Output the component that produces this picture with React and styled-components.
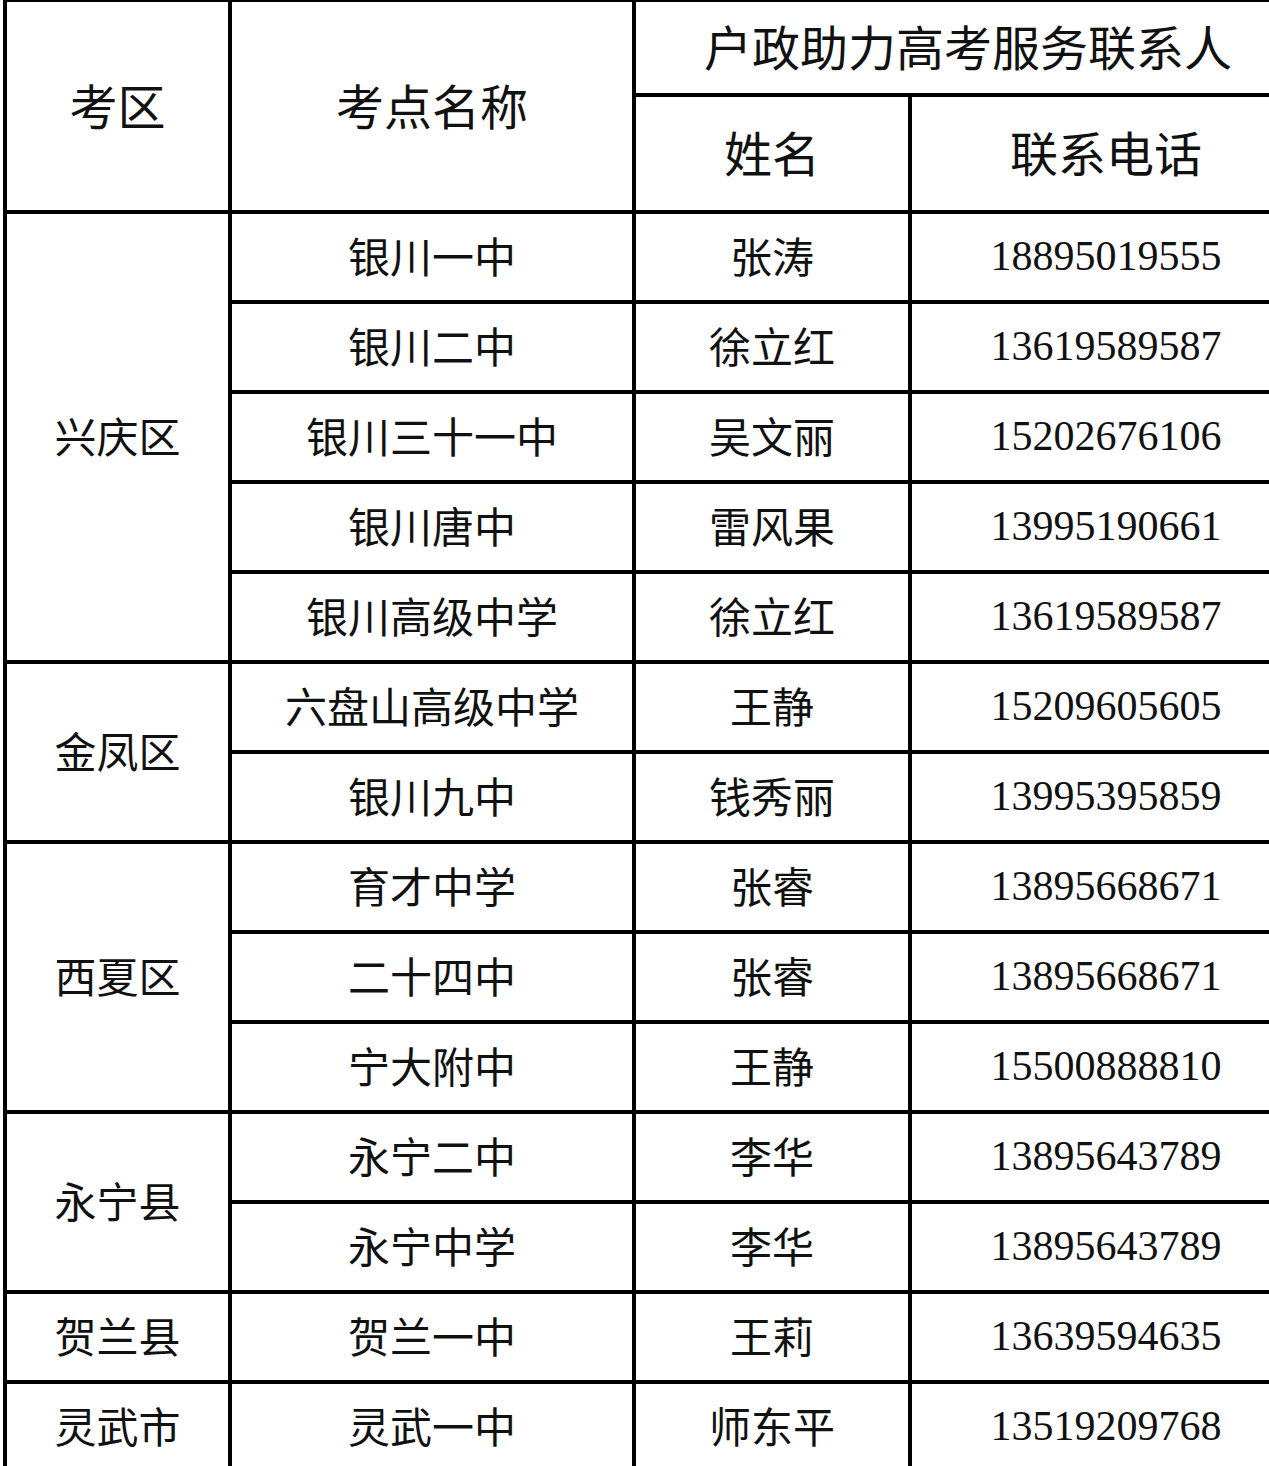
import styled, {createGlobalStyle} from 'styled-components';

const GlobalStyle = createGlobalStyle`
  html, body {
    margin: 0;
    padding: 0;
    background: #fff;
    overflow: hidden;
  }
`;

// 考区 -> 考点 list
const districts = [
  {
    name: '兴庆区',
    sites: [
      ['银川一中', '张涛', '18895019555'],
      ['银川二中', '徐立红', '13619589587'],
      ['银川三十一中', '吴文丽', '15202676106'],
      ['银川唐中', '雷风果', '13995190661'],
      ['银川高级中学', '徐立红', '13619589587'],
    ],
  },
  {
    name: '金凤区',
    sites: [
      ['六盘山高级中学', '王静', '15209605605'],
      ['银川九中', '钱秀丽', '13995395859'],
    ],
  },
  {
    name: '西夏区',
    sites: [
      ['育才中学', '张睿', '13895668671'],
      ['二十四中', '张睿', '13895668671'],
      ['宁大附中', '王静', '15500888810'],
    ],
  },
  {
    name: '永宁县',
    sites: [
      ['永宁二中', '李华', '13895643789'],
      ['永宁中学', '李华', '13895643789'],
    ],
  },
  {name: '贺兰县', sites: [['贺兰一中', '王莉', '13639594635']]},
  {name: '灵武市', sites: [['灵武一中', '师东平', '13519209768']]},
];

function App() {
  let row = 3;

  return (
    <>
      <GlobalStyle />
      <Sheet>
        <Cell $row="1 / span 2" $col="1" $kind="head">考区</Cell>
        <Cell $row="1 / span 2" $col="2" $kind="head">考点名称</Cell>
        <Cell $row="1" $col="3 / span 2" $kind="head">户政助力高考服务联系人</Cell>
        <Cell $row="2" $col="3" $kind="head">姓名</Cell>
        <Cell $row="2" $col="4" $kind="head">联系电话</Cell>

        {districts.map((d) => {
          const start = row;
          row += d.sites.length;
          return [
            <Cell key={d.name} $row={`${start} / span ${d.sites.length}`} $col="1">
              {d.name}
            </Cell>,
            ...d.sites.map(([site, person, phone], i) => (
              <Line key={d.name + i}>
                <Cell $row={start + i} $col="2">{site}</Cell>
                <Cell $row={start + i} $col="3">{person}</Cell>
                <Cell $row={start + i} $col="4" $kind="num">{phone}</Cell>
              </Line>
            )),
          ];
        })}
      </Sheet>
    </>
  );
}

const Sheet = styled.div`
  display: inline-grid;
  grid-template-columns: 221px 400px 272px 388px;
  grid-template-rows: 91px 113px repeat(14, 86px);
  gap: 4px;
  padding: 4px;
  margin: -2px 0 0 3px;
  background: #000;
`;

const Line = styled.div`
  display: contents;
`;

const Cell = styled.div`
  grid-row: ${({$row}) => $row};
  grid-column: ${({$col}) => $col};
  display: flex;
  align-items: center;
  justify-content: center;
  padding-bottom: ${({$kind}) => ($kind === 'num' ? '2px' : '5px')};
  background: #fff;
  color: #111;
  white-space: nowrap;
  font-family: ${({$kind}) =>
    $kind === 'num'
      ? '"Liberation Serif", "Times New Roman", serif'
      : '"Noto Sans CJK SC", "Noto Sans", sans-serif'};
  font-size: ${({$kind}) => ($kind === 'head' ? '48px' : '42px')};
  font-weight: 400;
  line-height: 1;
`;

export default App;
